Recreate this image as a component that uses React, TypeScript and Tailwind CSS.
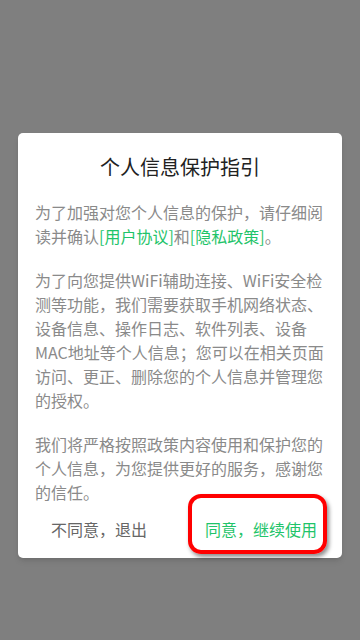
const green = "text-[#1fc46a]";

const PrivacyDialog = () => {
  return (
    <div className="w-[324px] rounded-[5px] bg-white shadow-md">
      <h1 className="pt-[20px] text-center text-[20px] leading-[28px] text-[#222]">个人信息保护指引</h1>

      <div className="flex flex-col gap-[20px] px-[17px] pt-[19px] text-[16px] leading-[24px] text-[#8a8a8a]">
        <p>
          为了加强对您个人信息的保护，请仔细阅读并确认<span className={green}>[用户协议]</span>和
          <span className={green}>[隐私政策]</span>。
        </p>
        <p>
          为了向您提供WiFi辅助连接、WiFi安全检测等功能，我们需要获取手机网络状态、设备信息、操作日志、软件列表、设备MAC地址等个人信息；您可以在相关页面访问、更正、删除您的个人信息并管理您的授权。
        </p>
        <p>我们将严格按照政策内容使用和保护您的个人信息，为您提供更好的服务，感谢您的信任。</p>
      </div>

      <div className="relative flex h-[54px] pb-[4px] text-[16px]">
        <button className="flex-1 text-[#666]">不同意，退出</button>
        <button className={`flex-1 ${green}`}>同意，继续使用</button>
        {/* red annotation box */}
        <span className="pointer-events-none absolute left-[170px] right-[15px] top-[-10px] bottom-[4px] rounded-[13px] border-[4px] border-[#ff0000] shadow-[2px_3px_4px_rgba(0,0,0,0.45)]" />
      </div>
    </div>
  );
};

export default function App() {
  return (
    <div
      className="flex h-[640px] w-[360px] items-start justify-center bg-[#7f7f7f] pt-[133px]"
      style={{ fontFamily: '"Noto Sans CJK SC", "Noto Sans", sans-serif' }}
    >
      <PrivacyDialog />
    </div>
  );
}
